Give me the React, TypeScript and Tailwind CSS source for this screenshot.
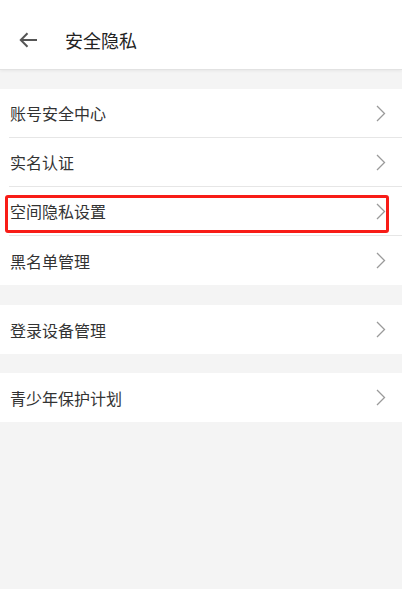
import React from 'react';

interface RowT {
	label: string;
	last?: boolean;
	marked?: boolean;
}

const Chevron = () => (
	<svg width="10" height="17" viewBox="0 0 10 17" fill="none">
		<path d="M1 1l7.5 7.5L1 16" stroke="#9a9a9a" strokeWidth="1.3" />
	</svg>
);

const Row = ({ label, last, marked }: RowT) => (
	<div className="relative h-[49px] bg-white">
		<div
			className={
				'ml-[9px] h-full flex items-center justify-between pl-[1px] pr-[16px] ' +
				(last ? '' : 'border-b border-[#e6e6e6]')
			}
		>
			<span className="text-[16px] text-[#333333] leading-none">{label}</span>
			<Chevron />
		</div>
		{marked && (
			<div className="absolute left-[5px] top-[8px] w-[384px] h-[38px] border-[3px] border-[#f81c17] rounded-[3px]" />
		)}
	</div>
);

const App = () => {
	return (
		<div
			className="w-[402px] h-[589px] bg-[#f4f4f4] overflow-hidden"
			style={{ fontFamily: '"Noto Sans CJK SC", "Noto Sans", sans-serif' }}
		>
			<div className="h-[70px] pt-[10px] bg-white border-b border-[#e2e2e2] shadow-[0_1px_3px_rgba(0,0,0,0.06)] flex items-center">
				<svg className="ml-[19px]" width="19" height="16" viewBox="0 0 19 16" fill="none">
					<path d="M18 8H2M8.5 1.3L1.8 8l6.7 6.7" stroke="#555555" strokeWidth="2" />
				</svg>
				<span className="ml-[27px] text-[18px] text-[#222222] leading-none">安全隐私</span>
			</div>

			<div className="mt-[19px]">
				<Row label="账号安全中心" />
				<Row label="实名认证" />
				<Row label="空间隐私设置" marked />
				<Row label="黑名单管理" last />
			</div>

			<div className="mt-[20px]">
				<Row label="登录设备管理" last />
			</div>

			<div className="mt-[19px]">
				<Row label="青少年保护计划" last />
			</div>
		</div>
	);
};

export default App;
